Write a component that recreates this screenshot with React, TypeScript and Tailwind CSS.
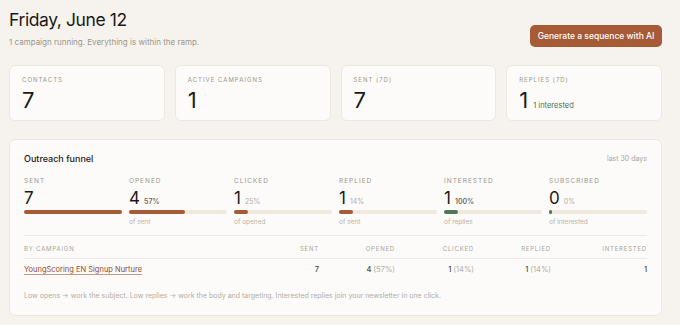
import React from "react";

const stats = [
  { label: "Contacts", value: "7" },
  { label: "Active campaigns", value: "1" },
  { label: "Sent (7d)", value: "7" },
  { label: "Replies (7d)", value: "1", note: "1 interested" },
];

const funnel = [
  { label: "Sent", value: "7", pct: "", bar: 100, sub: "", green: false, strong: false },
  { label: "Opened", value: "4", pct: "57%", bar: 57, sub: "of sent", green: false, strong: true },
  { label: "Clicked", value: "1", pct: "25%", bar: 14, sub: "of opened", green: false, strong: false },
  { label: "Replied", value: "1", pct: "14%", bar: 14, sub: "of sent", green: false, strong: false },
  { label: "Interested", value: "1", pct: "100%", bar: 14, sub: "of replies", green: true, strong: true },
  { label: "Subscribed", value: "0", pct: "0%", bar: 3, sub: "of interested", green: true, strong: false },
];

export default function App() {
  return (
    <div className="min-h-[325px] bg-[#f6f3ee] text-[#1f1d1a]" style={{ fontFamily: "Inter, 'Noto Sans', sans-serif" }}>
      <div className="w-[653px] ml-[9px] pt-[9px]">
        <div className="flex items-start justify-between">
          <div>
            <h1 className="text-[17.5px] leading-[22px] tracking-[-0.4px] text-[#1c1a17]">Friday, June 12</h1>
            <p className="mt-[5px] text-[8px] leading-[12px] text-[#9b958c]">1 campaign running. Everything is within the ramp.</p>
          </div>
          <button className="mt-[16px] h-[22px] w-[132px] rounded-[5px] bg-[#a65a35] text-white text-[8.5px] font-medium">
            Generate a sequence with AI
          </button>
        </div>

        <div className="mt-[17px] grid grid-cols-4 gap-[10px]">
          {stats.map((s) => (
            <div key={s.label} className="h-[56px] rounded-[6px] bg-[#fcfbf9] border border-[#ece7df] px-[12px] pt-[10px]">
              <div className="text-[6px] leading-[8px] uppercase tracking-[1px] text-[#9b958c]">{s.label}</div>
              <div className="flex items-baseline gap-[5px] mt-[4px]">
                <span className="text-[22px] leading-[24px] text-[#1c1a17]">{s.value}</span>
                {s.note && <span className="text-[7.5px] text-[#4f6e52]">{s.note}</span>}
              </div>
            </div>
          ))}
        </div>

        <div className="mt-[18px] rounded-[6px] bg-[#fcfbf9] border border-[#ece7df] px-[14px] pt-[13px] pb-[14px]">
          <div className="flex items-center justify-between h-[12px]">
            <div className="text-[9px] font-medium text-[#1c1a17]">Outreach funnel</div>
            <div className="text-[7px] text-[#aaa49b]">last 30 days</div>
          </div>

          <div className="mt-[12px] grid grid-cols-6 gap-[7px]">
            {funnel.map((f) => (
              <div key={f.label}>
                <div className="text-[6.5px] leading-[8px] uppercase tracking-[1px] text-[#9b958c]">{f.label}</div>
                <div className="flex items-baseline gap-[4px] mt-[3px] h-[20px]">
                  <span className="text-[17px] leading-[20px] text-[#1c1a17]">{f.value}</span>
                  {f.pct && (
                    <span className={f.strong ? "text-[7px] font-semibold text-[#6f6a62]" : "text-[7px] text-[#b3ada4]"}>{f.pct}</span>
                  )}
                </div>
                <div className="mt-[2px] h-[4px] rounded-full bg-[#efe9e0]">
                  <div
                    className={f.green ? "h-full rounded-full bg-[#4d7a55]" : "h-full rounded-full bg-[#a65a35]"}
                    style={{ width: `${f.bar}%` }}
                  />
                </div>
                <div className="mt-[4px] h-[8px] leading-[8px] text-[6.5px] text-[#b8b2a9]">{f.sub}</div>
              </div>
            ))}
          </div>

          <div className="mt-[9px] border-t border-[#efeae3]" />

          <div className="grid grid-cols-[225px_70px_76px_79px_77px_96px] text-[6px] uppercase tracking-[0.8px] text-[#aaa49b] h-[23px] pt-[2px] items-center border-b border-[#efeae3]">
            <div>By campaign</div>
            <div className="text-right">Sent</div>
            <div className="text-right">Opened</div>
            <div className="text-right">Clicked</div>
            <div className="text-right">Replied</div>
            <div className="text-right">Interested</div>
          </div>
          <div className="grid grid-cols-[225px_70px_76px_79px_77px_96px] text-[7.5px] font-medium h-[22px] items-center text-[#4a4640]">
            <div>
              <span className="text-[7.5px] font-normal text-[#8c4a2c] underline underline-offset-2 decoration-[#c99a82]">YoungScoring EN Signup Nurture</span>
            </div>
            <div className="text-right">7</div>
            <div className="text-right">4 <span className="font-normal text-[#b3ada4]">(57%)</span></div>
            <div className="text-right">1 <span className="font-normal text-[#b3ada4]">(14%)</span></div>
            <div className="text-right">1 <span className="font-normal text-[#b3ada4]">(14%)</span></div>
            <div className="text-right">1</div>
          </div>

          <p className="mt-[10px] text-[7px] leading-[10px] text-[#b3ada4]">
            Low opens → work the subject. Low replies → work the body and targeting. Interested replies join your newsletter in one click.
          </p>
        </div>
      </div>
    </div>
  );
}
